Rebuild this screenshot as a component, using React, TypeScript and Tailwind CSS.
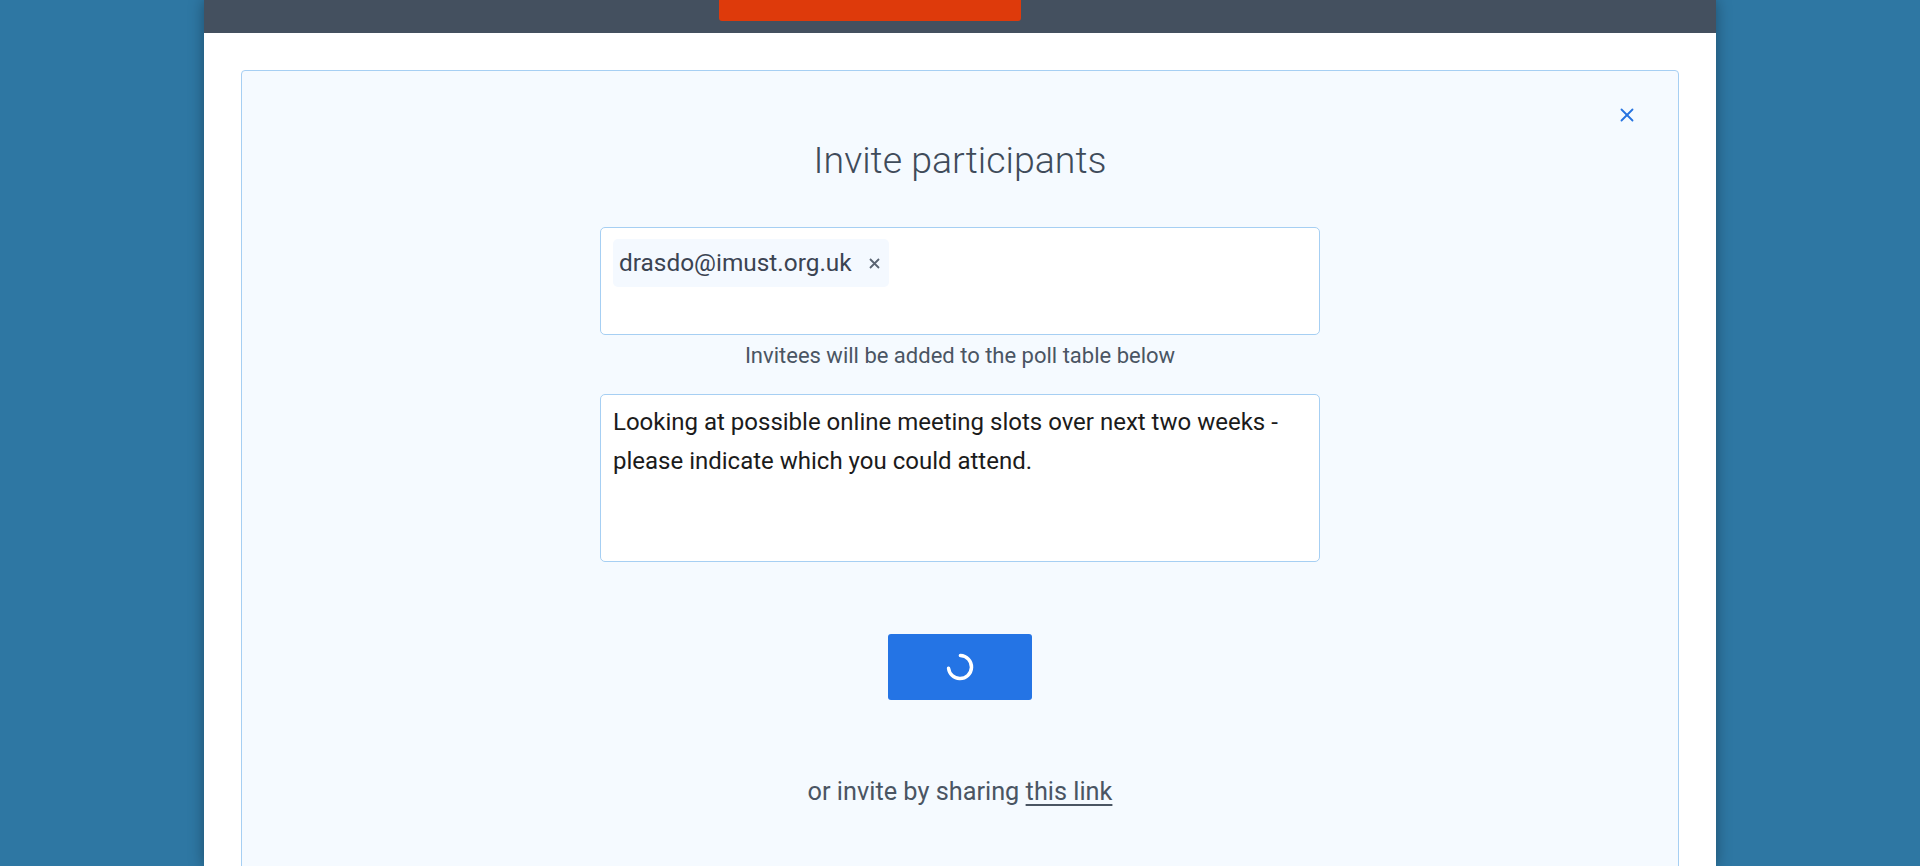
import { X } from 'lucide-react';

const font = { fontFamily: 'Roboto, "Noto Sans", sans-serif' };

function Spinner() {
  // 3/4 ring, gap on the upper-left
  const r = 11.5;
  const c = 2 * Math.PI * r;
  return (
    <svg width="30" height="30" viewBox="0 0 30 30">
      <circle
        cx="15"
        cy="15"
        r={r}
        fill="none"
        stroke="white"
        strokeWidth="3.5"
        strokeLinecap="round"
        strokeDasharray={`${c * 0.72} ${c}`}
        transform="rotate(-88 15 15)"
      />
    </svg>
  );
}

function InviteeChip({ email }: { email: string }) {
  return (
    <div className="inline-flex items-center h-[48px] pl-[6px] pr-[9px] gap-[17px] bg-[#f4f9ff] rounded-[5px]">
      <span className="text-[24.4px] leading-[30px] text-[#3b4452]">{email}</span>
      <svg width="11" height="11" viewBox="0 0 11 11" className="text-[#5a6472]">
        <path d="M1 1L10 10M10 1L1 10" stroke="currentColor" strokeWidth="1.8" />
      </svg>
    </div>
  );
}

export default function App() {
  return (
    <div className="h-[866px] bg-[#2e77a3] overflow-hidden" style={font}>
      <div className="mx-auto w-[1512px] h-[866px] bg-white shadow-[0_0_14px_rgba(0,0,0,0.35)] overflow-hidden">
        {/* Header bar (page is scrolled, only its bottom shows) */}
        <div className="h-[33px] bg-[#44505f] overflow-hidden">
          <div className="ml-[515px] -mt-[33px] w-[302px] h-[54px] bg-[#de3a0b] rounded-[3px]" />
        </div>

        {/* Invite panel */}
        <div className="px-[37px] pt-[37px]">
          <div className="relative h-[820px] bg-[#f5faff] border border-[#a6cff3] rounded-[4px] flex flex-col items-center pt-[67px]">
            <button className="absolute top-[33px] right-[40px] text-[#2673e0]" aria-label="Close">
              <X size={22} strokeWidth={2} />
            </button>

            <h2 className="text-[37.5px] leading-[45px] font-light text-[#3f4b5a]">Invite participants</h2>

            <div className="mt-[44px] w-[720px] h-[108px] bg-white border border-[#a6cff3] rounded-[5px] px-[12px] pt-[11px]">
              <InviteeChip email="drasdo@imust.org.uk" />
            </div>

            <p className="mt-[7px] text-[22px] leading-[28px] text-[#4a5563]">
              Invitees will be added to the poll table below
            </p>

            <div className="mt-[24px] w-[720px] h-[168px] bg-white border border-[#a6cff3] rounded-[5px] px-[12px] pt-[8px]">
              <p className="text-[24px] leading-[39px] text-[#1b1b1b]">
                Looking at possible online meeting slots over next two weeks - please indicate which you could
                attend.
              </p>
            </div>

            <button className="mt-[72px] w-[144px] h-[66px] bg-[#2474e5] rounded-[3px] flex items-center justify-center">
              <Spinner />
            </button>

            <p className="mt-[76px] text-[25.3px] leading-[32px] text-[#4a5563]">
              or invite by sharing <span className="underline underline-offset-[4px]">this link</span>
            </p>
          </div>
        </div>
      </div>
    </div>
  );
}
